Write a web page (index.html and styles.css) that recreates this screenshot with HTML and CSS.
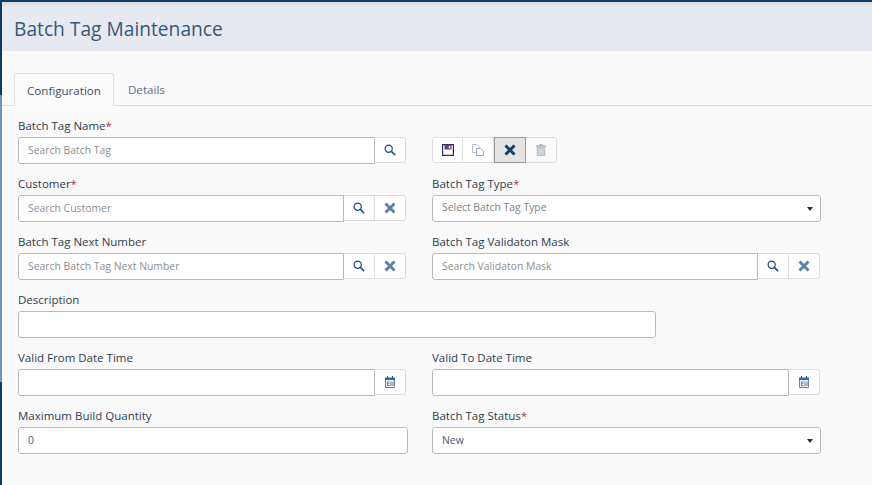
FILE: index.html
```html
<!DOCTYPE html>
<html lang="en">
<head>
  <meta charset="UTF-8" />
  <title>Batch Tag Maintenance</title>
  <link rel="stylesheet" href="styles.css">
</head>
<body>
  <svg class="icon-defs" width="0" height="0" aria-hidden="true">
    <symbol id="i-search" viewBox="0 0 12 12">
      <circle cx="4.7" cy="4.7" r="3.6" fill="none" stroke="currentColor" stroke-width="1.2"/>
      <path d="M7.4 7.4 11.200 11.200" fill="none" stroke="currentColor" stroke-width="1.6"/>
    </symbol>
    <symbol id="i-x" viewBox="0 0 12 12">
      <path d="M1.500 1.500 10.500 10.500M10.500 1.500 1.500 10.500" fill="none" stroke="currentColor" stroke-width="3"/>
    </symbol>
    <symbol id="i-cal" viewBox="0 0 10 12">
      <path d="M.5 2.500h9v9h-9z" fill="#eef1f6" stroke="#6f7fa0"/>
      <path d="M0 1.500h10V4H0z" fill="#2f68b5"/>
      <path d="M2 0h1v2H2zM7 0h1v2H7z" fill="#34507f"/>
      <path d="M2 5.500h2.500v.8H3v1h1.500v.8H3v1h1.500v.9H2zM5.500 5.500h1v4.500h-1zM7.500 5.500h1v4.500h-1z" fill="#6f7fa0"/>
    </symbol>
  </svg>

  <div class="page">
    <header class="page-header">
      <h1>Batch Tag Maintenance</h1>
    </header>

    <nav class="tabs">
      <a class="tab active">Configuration</a>
      <a class="tab">Details</a>
    </nav>

    <form class="form">
      <div class="field">
        <label>Batch Tag Name<span class="req">*</span></label>
        <div class="group">
          <input class="input" placeholder="Search Batch Tag" />
          <button type="button" class="addon"><svg class="ic-search"><use href="#i-search"/></svg></button>
        </div>
      </div>
      <div class="toolbar-cell">
        <div class="toolbar">
          <button type="button" class="tool">
            <svg width="12" height="12" viewBox="0 0 12 12"><path d="M.6.6h10.800v10.800H.6z" fill="#fff" stroke="#26306a" stroke-width="1.200"/><path d="M2.500 1h7v4.500h-7z" fill="#7a3a68"/><path d="M6.800 1.800h1.400v2.600H6.800z" fill="#fff"/></svg>
          </button>
          <button type="button" class="tool">
            <svg width="12" height="12" viewBox="0 0 12 12"><path d="M.5.5h4.500l2 2v6H.5z" fill="#fff" stroke="#b4c0d0"/><path d="M4.500 4.500h4l3 2.500v4.500h-7z" fill="#fff" stroke="#9aabc0"/></svg>
          </button>
          <button type="button" class="tool pressed"><svg class="ic-x dark"><use href="#i-x"/></svg></button>
          <button type="button" class="tool">
            <svg width="10" height="12" viewBox="0 0 10 12"><path d="M3.500 1.300V.5h3v.8M.5 1.500h9v1.300h-9z" fill="#ccd4de" stroke="#a3b1c3" stroke-width=".7"/><path d="M1.200 3.500h7.600v8H1.200z" fill="#cbd4df" stroke="#9fafc2" stroke-width=".7"/></svg>
          </button>
        </div>
      </div>

      <div class="field">
        <label>Customer<span class="req">*</span></label>
        <div class="group">
          <input class="input" placeholder="Search Customer" />
          <button type="button" class="addon"><svg class="ic-search"><use href="#i-search"/></svg></button>
          <button type="button" class="addon"><svg class="ic-x"><use href="#i-x"/></svg></button>
        </div>
      </div>
      <div class="field">
        <label>Batch Tag Type<span class="req">*</span></label>
        <div class="select placeholder">Select Batch Tag Type</div>
      </div>

      <div class="field">
        <label>Batch Tag Next Number</label>
        <div class="group">
          <input class="input" placeholder="Search Batch Tag Next Number" />
          <button type="button" class="addon"><svg class="ic-search"><use href="#i-search"/></svg></button>
          <button type="button" class="addon"><svg class="ic-x"><use href="#i-x"/></svg></button>
        </div>
      </div>
      <div class="field">
        <label>Batch Tag Validaton Mask</label>
        <div class="group">
          <input class="input" placeholder="Search Validaton Mask" />
          <button type="button" class="addon"><svg class="ic-search"><use href="#i-search"/></svg></button>
          <button type="button" class="addon"><svg class="ic-x"><use href="#i-x"/></svg></button>
        </div>
      </div>

      <div class="field span-2">
        <label>Description</label>
        <input class="input description" />
      </div>

      <div class="field">
        <label>Valid From Date Time</label>
        <div class="group">
          <input class="input" />
          <button type="button" class="addon"><svg class="ic-cal"><use href="#i-cal"/></svg></button>
        </div>
      </div>
      <div class="field">
        <label>Valid To Date Time</label>
        <div class="group">
          <input class="input" />
          <button type="button" class="addon"><svg class="ic-cal"><use href="#i-cal"/></svg></button>
        </div>
      </div>

      <div class="field">
        <label>Maximum Build Quantity</label>
        <input class="input full" value="0" />
      </div>
      <div class="field">
        <label>Batch Tag Status<span class="req">*</span></label>
        <div class="select">New</div>
      </div>
    </form>
  </div>
</body>
</html>
```

FILE: styles.css
```css
* {
  box-sizing: border-box;
}

html, body {
  margin: 0;
  height: 100%;
}

body {
  font-family: "Open Sans", sans-serif;
  font-size: 10px;
  color: #2e3d4f;
  background: #f9f9f9;
  overflow: hidden;
}

.icon-defs {
  display: block;
}

/* Franja izquierda: el tono claro va de 95px a 382px */
.page {
  height: 485px;
  padding-left: 2px;
  border-top: 2px solid #0c3c66;
  background: linear-gradient(to bottom, #0c3c66 93px, #6f97bd 93px, #6f97bd 380px, #0c3c66 380px) left top / 2px 100% no-repeat;
}

/* Titulo */
.page-header {
  height: 49px;
  padding: 4px 0 0 12px;
  display: flex;
  align-items: center;
  background: linear-gradient(to bottom, #d5d9df, #e6eaf0 5px);
}

.page-header h1 {
  margin: 0;
  font-size: 19.200px;
  font-weight: 400;
  color: #35597c;
}

/* Tabs */
.tabs {
  display: flex;
  height: 33px;
  margin-top: 22px;
  padding-left: 12px;
  border-bottom: 1px solid #dcdfe3;
}

.tab {
  height: 33px;
  padding: 9px 14px 0 14px;
  font-size: 11.600px;
  color: #5d7084;
}

.tab.active {
  padding: 9px 12px 0 12px;
  color: #3d4f61;
  background: #fbfbfb;
  border: 1px solid #dcdfe3;
  border-bottom-color: #fbfbfb;
  border-radius: 3px 3px 0 0;
}

/* Formulario */
.form {
  display: grid;
  grid-template-columns: 390px 389px;
  column-gap: 24px;
  grid-auto-rows: 58px;
  padding: 13px 0 0 16px;
}

.field {
  display: flex;
  flex-direction: column;
  min-width: 0;
}

.field label {
  height: 18px;
  font-size: 11.500px;
  font-weight: 500;
  line-height: 13px;
  color: #2e3d4f;
}

.span-2 {
  grid-column: span 2;
}

.req {
  color: #b5334a;
}

.group {
  display: flex;
  width: 388px;
}

.input {
  flex: 1;
  min-width: 0;
  height: 27px;
  padding: 0 9px 1px;
  font: 10.400px "Open Sans", sans-serif;
  color: #4a5a6c;
  background: #fff;
  border: 1px solid #b9b9b9;
  border-radius: 3px 0 0 3px;
  outline: none;
}

.input::placeholder {
  color: #8b8f94;
  opacity: 1;
}

.input.description {
  flex: none;
  width: 638px;
  border-radius: 3px;
}

.input.full {
  flex: none;
  width: 390px;
  border-radius: 3px;
}

.addon {
  flex: none;
  width: 31px;
  height: 26px;
  padding: 0;
  display: flex;
  align-items: center;
  justify-content: center;
  background: #fff;
  border: 1px solid #dedede;
  border-left: none;
}

.addon:last-child {
  border-radius: 0 3px 3px 0;
}

.ic-search {
  width: 12px;
  height: 12px;
  color: #1c4a80;
}

.ic-x {
  width: 12px;
  height: 12px;
  color: #5f82a6;
}

.ic-x.dark {
  color: #143f6b;
}

.ic-cal {
  width: 10px;
  height: 12px;
}

/* Barra de acciones */
.toolbar-cell {
  padding-top: 18px;
}

.toolbar {
  display: inline-flex;
  height: 26px;
  border: 1px solid #dedede;
  border-radius: 3px;
  background: #fff;
}

.tool {
  width: 31px;
  padding: 0;
  display: flex;
  align-items: center;
  justify-content: center;
  background: #fff;
  border: none;
  border-right: 1px solid #dedede;
}

.tool:first-child {
  width: 30px;
  border-radius: 3px 0 0 3px;
}

.tool:last-child {
  width: 30px;
  border-right: none;
  background: #fafafa;
  border-radius: 0 3px 3px 0;
}

.tool.pressed {
  width: 32px;
  margin: -1px 0;
  height: 26px;
  background: #e4e4e4;
  border: 1px solid #9a9a9a;
}

/* Selects */
.select {
  position: relative;
  width: 389px;
  height: 27px;
  padding: 0 9px 1px;
  display: flex;
  align-items: center;
  font-size: 10.400px;
  color: #4a5a6c;
  background: #fff;
  border: 1px solid #b9b9b9;
  border-radius: 3px;
}

.select.placeholder {
  padding-bottom: 3px;
  color: #7d8288;
}

.select::after {
  content: "";
  position: absolute;
  right: 7px;
  top: 11px;
  border-left: 3.500px solid transparent;
  border-right: 3.500px solid transparent;
  border-top: 4px solid #2b2b2b;
}
```
